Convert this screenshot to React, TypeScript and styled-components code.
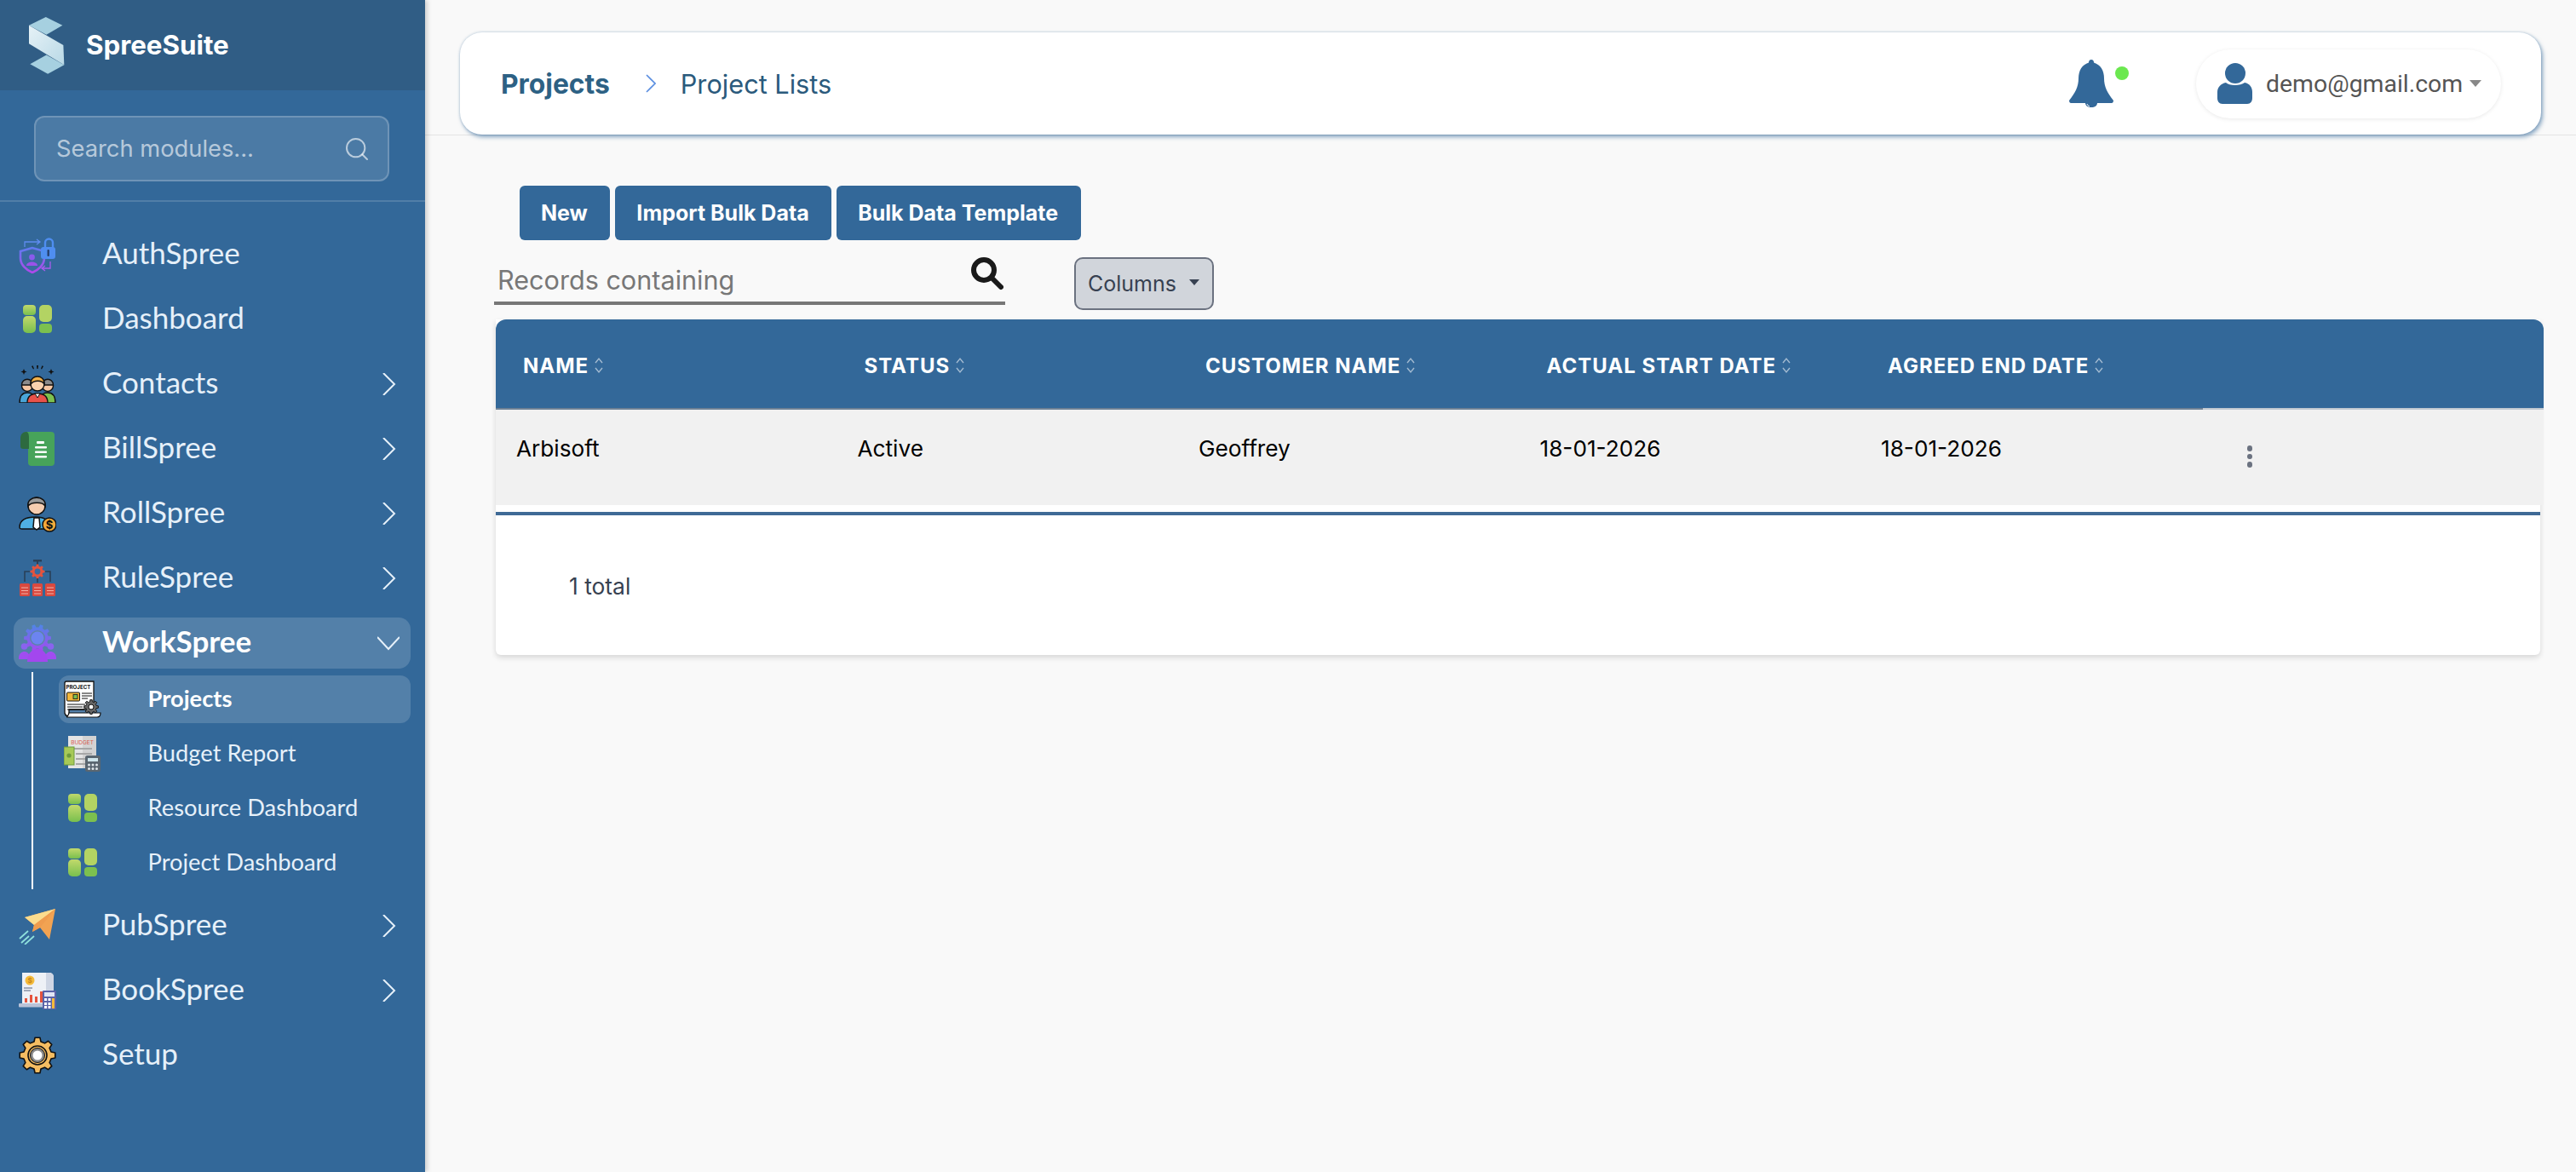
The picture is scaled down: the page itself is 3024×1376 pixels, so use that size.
import React from "react";
import styled, { createGlobalStyle } from "styled-components";
import { Search as SearchGlyph } from "lucide-react";

const GlobalStyle = createGlobalStyle`
  html, body { margin: 0; padding: 0; height: 100%; background: #f9f9f9; }
  #root { height: 100%; }
  * { box-sizing: border-box; }
`;

const Shell = styled.div`
  display: flex;
  width: 3024px;
  height: 1376px;
  overflow: hidden;
  background: #f9f9f9;
  font-family: Inter, "Liberation Sans", sans-serif;
`;

const Sidebar = styled.aside`
  flex: 0 0 499px;
  width: 499px;
  min-width: 0;
  display: flex;
  flex-direction: column;
  background: #336899;
  box-shadow: 3px 0 5px rgba(0, 0, 0, 0.16);
  position: relative;
  z-index: 2;
`;

const Brand = styled.div`
  height: 106px;
  display: flex;
  align-items: center;
  gap: 25px;
  padding-left: 33px;
  background: #305d85;
`;

const BrandName = styled.span`
  font-size: 31.3px;
  font-weight: 700;
  color: #fff;
`;

const SearchArea = styled.div`
  padding: 30px 42px 22px 40px;
  border-bottom: 2px solid rgba(255, 255, 255, 0.15);
`;

const ModuleSearch = styled.label`
  height: 77px;
  display: flex;
  align-items: center;
  padding: 0 20px 0 24px;
  background: rgba(255, 255, 255, 0.12);
  border: 2px solid rgba(255, 255, 255, 0.2);
  border-radius: 12px;
  color: rgba(255, 255, 255, 0.62);
`;

const ModuleInput = styled.input`
  flex: 1;
  width: 100%;
  min-width: 0;
  padding: 0;
  border: 0;
  outline: 0;
  background: transparent;
  font: 400 27.3px Inter, sans-serif;
  color: #fff;
  &::placeholder { color: rgba(255, 255, 255, 0.62); opacity: 1; }
`;

const Nav = styled.nav`
  display: flex;
  flex-direction: column;
  gap: 16px;
  padding: 32px 17px 0 16px;
`;

const NavGroup = styled.div`
  display: flex;
  flex-direction: column;
`;

const NavRow = styled.div<{ $active?: boolean }>`
  height: 60px;
  display: flex;
  align-items: center;
  gap: 54px;
  padding: 0 13px 0 6px;
  border-radius: 14px;
  background: ${(p) => (p.$active ? "rgba(255,255,255,0.16)" : "transparent")};
`;

const NavLabel = styled.span<{ $active?: boolean }>`
  flex: 1;
  padding-bottom: 7px;
  font-family: Lato, sans-serif;
  font-size: 35px;
  font-weight: ${(p) => (p.$active ? 700 : 400)};
  color: ${(p) => (p.$active ? "#fff" : "#e6f0f9")};
`;

const Chevron = styled.svg`
  flex: 0 0 26px;
  width: 26px;
  height: 26px;
  fill: none;
  stroke: #e6f0f9;
  stroke-width: 2;
`;

const SubList = styled.div`
  display: flex;
  flex-direction: column;
  gap: 8px;
  margin: 4px 0 -3px 21px;
  padding: 4px 0 3px 30px;
  border-left: 2px solid #fff;
`;

const SubRow = styled.div<{ $active?: boolean }>`
  height: 56px;
  display: flex;
  align-items: center;
  gap: 54.500px;
  padding-left: 6px;
  border-radius: 12px;
  background: ${(p) => (p.$active ? "rgba(255,255,255,0.16)" : "transparent")};
`;

const SubLabel = styled.span<{ $active?: boolean }>`
  padding-bottom: 4px;
  font-family: Lato, sans-serif;
  font-size: 27.3px;
  font-weight: ${(p) => (p.$active ? 700 : 400)};
  color: ${(p) => (p.$active ? "#fff" : "#e6f0f9")};
`;

const Main = styled.main`
  flex: 1;
  min-width: 0;
  display: flex;
  flex-direction: column;
`;

const TopBand = styled.header`
  height: 159px;
  padding: 38px 41px 0;
  border-bottom: 1px solid #e4e4e4;
`;

const TopCard = styled.div`
  height: 120px;
  display: flex;
  align-items: center;
  padding: 0 47px 0 48px;
  background: #fff;
  border-radius: 26px;
  box-shadow: 0 0 3px rgba(51, 104, 153, 0.35), 2px 3px 5px rgba(51, 104, 153, 0.55);
`;

const CrumbRoot = styled.span`
  font-size: 31.8px;
  font-weight: 700;
  color: #2d6184;
`;

const CrumbLeaf = styled.span`
  flex: 1;
  font-size: 30.7px;
  color: #2b5a7c;
`;

const CrumbChevron = styled.svg`
  width: 12px;
  height: 22px;
  margin: 0 29px 0 42px;
  fill: none;
  stroke: #5a8ee0;
  stroke-width: 1.6;
`;

const BellWrap = styled.div`
  position: relative;
  width: 52px;
  height: 56px;
  margin-right: 97px;
`;

const BellDot = styled.span`
  position: absolute;
  top: 8px;
  left: 54px;
  width: 16px;
  height: 16px;
  border-radius: 50%;
  background: #6be84f;
`;

const UserPill = styled.div`
  width: 358px;
  height: 81px;
  display: flex;
  align-items: center;
  padding-left: 25px;
  border-radius: 41px;
  background: #fff;
  box-shadow: 0 1px 5px rgba(0, 0, 0, 0.09);
`;

const UserMail = styled.span`
  margin-left: 16px;
  font-family: Roboto, sans-serif;
  font-size: 28.4px;
  color: #555;
`;

const UserCaret = styled.span`
  margin-left: 8px;
  border-left: 7px solid transparent;
  border-right: 7px solid transparent;
  border-top: 8px solid #888;
`;

const Content = styled.div`
  display: flex;
  flex-direction: column;
  padding-top: 59px;
`;

const ActionBar = styled.div`
  display: flex;
  gap: 6px;
  padding-left: 111px;
`;

const ActionButton = styled.button`
  height: 64px;
  padding: 0 26.5px 0 25px;
  border: 0;
  border-radius: 6px;
  background: #336899;
  color: #fff;
  font: 700 25px Inter, sans-serif;
`;

const FilterBar = styled.div`
  display: flex;
  align-items: flex-start;
  gap: 81px;
  margin: 20px 0 11px 81px;
`;

const RecordSearch = styled.div`
  width: 600px;
  height: 56px;
  display: flex;
  align-items: flex-start;
  padding: 0 2px 0 4px;
  border-bottom: 4px solid #777;
`;

const RecordInput = styled.input`
  flex: 1;
  min-width: 0;
  height: 52px;
  padding: 0;
  border: 0;
  outline: 0;
  background: transparent;
  font: 400 30.6px Inter, sans-serif;
  &::placeholder { color: #777; opacity: 1; }
`;

const ColumnsButton = styled.button`
  width: 164px;
  height: 62px;
  display: flex;
  align-items: center;
  padding: 0 0 0 14px;
  background: #d1d5db;
  border: 2px solid #6b7280;
  border-radius: 10px;
  color: #374151;
  font: 400 25px Inter, sans-serif;
`;

const ColumnsCaret = styled.span`
  margin: 0 0 4px 15px;
  border-left: 6.5px solid transparent;
  border-right: 6.5px solid transparent;
  border-top: 7px solid #374151;
`;

const TableCard = styled.section`
  width: 2400px;
  height: 394px;
  margin-left: 83px;
  background: #fff;
  border-radius: 0 0 6px 6px;
  box-shadow: 0 3px 6px rgba(0, 0, 0, 0.14);
`;

const TableHead = styled.div`
  width: 2404px;
  height: 106px;
  display: grid;
  grid-template-columns: repeat(5, 400.5px) 1fr;
  align-items: center;
  padding-top: 4px;
  background: #336899;
  border-style: solid;
  border-width: 0 0 2px;
  border-image: linear-gradient(to right, #6f8296 2003px, #c0c8d0 2003px) 1;
  border-radius: 12px 12px 0 0;
`;

const HeadCell = styled.div`
  display: flex;
  align-items: center;
  gap: 7px;
  padding-left: 32px;
  font-size: 24px;
  font-weight: 700;
  letter-spacing: 1px;
  color: #fff;
`;

const SortIcon = styled.svg`
  width: 10px;
  height: 20px;
  fill: none;
  stroke: rgba(255, 255, 255, 0.55);
  stroke-width: 1.4;
`;

const TableRow = styled.div`
  width: 2404px;
  height: 112px;
  display: grid;
  grid-template-columns: repeat(5, 400.5px) 1fr;
  padding-top: 30px;
  background: #f1f1f1;
`;

const BodyCell = styled.div`
  padding-left: 24px;
  font-size: 26.2px;
  line-height: 32px;
  color: #000;
`;

const RowMenu = styled.div`
  display: flex;
  flex-direction: column;
  gap: 3px;
  margin: 12px 0 0 53px;
`;

const RowMenuDot = styled.span`
  width: 6px;
  height: 6.5px;
  border-radius: 50%;
  background: #6b7280;
`;

const TableFoot = styled.div`
  margin-top: 8px;
  height: 168px;
  padding: 67px 0 0 86px;
  border-top: 4px solid #3f6a96;
  font-size: 26.4px;
  line-height: 32px;
  color: #374151;
`;

const gear = (cx: number, cy: number, ro: number, ri: number, n: number) => {
  let d = "";
  for (let i = 0; i < n; i++) {
    const a = (i / n) * Math.PI * 2;
    const w = Math.PI / n;
    const pt = (r: number, t: number) =>
      `${(cx + r * Math.cos(t)).toFixed(2)} ${(cy + r * Math.sin(t)).toFixed(2)}`;
    d += `${i ? "L" : "M"}${pt(ri, a - w * 0.62)} L${pt(ro, a - w * 0.36)} L${pt(ro, a + w * 0.36)} L${pt(ri, a + w * 0.62)} `;
  }
  return d + "Z";
};

const IconSvg = styled.svg`
  flex: 0 0 44px;
  width: 44px;
  height: 44px;
`;

const BrandMark = () => (
  <svg width="43" height="70" viewBox="100 50 130 210">
    <defs>
      <linearGradient id="lg-s" x1="0" y1="0" x2="1" y2="1">
        <stop offset="0" stopColor="#e6f2f7" />
        <stop offset="1" stopColor="#b9d9e6" />
      </linearGradient>
    </defs>
    <path d="M103 85 163 55 222 85 165 118Z" fill="#a6d0e0" />
    <path d="M107 222 165 190 228 225 170 257Z" fill="#a6d0e0" />
    <path d="M103 85 225 155 228 225 103 150Z" fill="url(#lg-s)" />
  </svg>
);

const AuthIcon = () => (
  <IconSvg viewBox="0 0 44 44">
    <defs>
      <linearGradient id="lg-a" x1="0" y1="0" x2="0" y2="1">
        <stop offset="0" stopColor="#5f7cf0" />
        <stop offset="1" stopColor="#b148ea" />
      </linearGradient>
    </defs>
    <path d="M16 14 2 18V26C2 34 9 40 16 43 23 40 30 34 30 26V18Z" fill="#3a6ba0" stroke="url(#lg-a)" strokeWidth="2.6" />
    <circle cx="15.5" cy="25" r="3.4" fill="#8a5bec" />
    <path d="M9 35C9 29 22 29 22 35Z" fill="#9a52ea" />
    <path d="M7 13V7H24M21 4 25 7 21 10" fill="none" stroke="#5f8cf0" strokeWidth="1.3" />
    <path d="M37 30V38H28M31 35 27 38 31 41" fill="none" stroke="#a95cee" strokeWidth="1.3" />
    <path d="M31 14V8A4.5 4.5 0 0 1 40 8V14" fill="none" stroke="#4f8ef0" strokeWidth="2.4" />
    <rect x="26" y="13" width="17" height="14" rx="3" fill="#4f8ef0" />
    <rect x="33.5" y="16" width="2.4" height="8" rx="1" fill="#26406e" />
  </IconSvg>
);

const TilesIcon = () => (
  <IconSvg viewBox="-5 -5 44 44">
    <defs>
      <linearGradient id="lg-t" x1="0" y1="0" x2="0" y2="1">
        <stop offset="0" stopColor="#c2d96c" />
        <stop offset="1" stopColor="#78bf4e" />
      </linearGradient>
    </defs>
    <g fill="url(#lg-t)">
      <rect x="0" y="0" width="15" height="12" rx="4" />
      <rect x="0" y="13" width="15" height="20" rx="5" />
    </g>
    <rect x="19" y="0" width="15" height="20" rx="5" fill="#b3d363" />
    <rect x="19" y="22" width="15" height="11" rx="4" fill="#7cc04f" />
  </IconSvg>
);

const ContactsIcon = () => (
  <IconSvg viewBox="0 0 44 44">
    <g fill="#111">
      <path d="M21 0h2l-.4 4h-1.2zM15 1l1.6-.7 1.4 3.6-1 .5zM29 1l-1.6-.7L26 3.900l1 .5z" />
      <path d="M6 4 7 6.500 9.500 7.500 7 8.500 6 11 5 8.500 2.500 7.500 5 6.500zM38 4l1 2.500 2.500 1-2.500 1-1 2.500-1-2.500-2.500-1 2.500-1z" />
    </g>
    <g stroke="#111" strokeWidth="1.4">
      <path d="M1 44C1 34 6 32 10 32S20 34 20 44Z" fill="#49a5d8" />
      <path d="M24 44C24 34 30 32 34 32S43 34 43 44Z" fill="#7cc04f" />
      <circle cx="10" cy="24" r="6.500" fill="#f5c7a3" />
      <path d="M3.500 23C3.500 14 16.500 14 16.500 23Z" fill="#8b8b8b" />
      <circle cx="34" cy="24" r="6.500" fill="#f5c7a3" />
      <path d="M27.500 23C27.500 14 40.500 14 40.500 23Z" fill="#8b8b8b" />
      <path d="M10 44C10 35 16 33 22 33S34 35 34 44Z" fill="#e8524a" />
      <circle cx="22" cy="22" r="8" fill="#f9d2ae" />
      <path d="M14 22C13 10 31 10 30 22 27 17 18 17 14 22Z" fill="#f0b04a" />
    </g>
    <path d="M19 33 22 38 25 33Z" fill="#fff" stroke="#111" strokeWidth="1" />
  </IconSvg>
);

const BillIcon = () => (
  <IconSvg viewBox="0 0 44 44">
    <path d="M9 2H38A4 4 0 0 1 42 6V38A4 4 0 0 1 38 42H15A4 4 0 0 1 11 38V22H4V8A6 6 0 0 1 9 2Z" fill="#47a35a" />
    <path d="M9 2C5 2 2 5 2 9V19A3 3 0 0 0 5 22H12V9C12 5 11 2 9 2Z" fill="#2d6a3f" />
    <g fill="#fff">
      <rect x="21" y="13" width="9" height="3" rx="1" />
      <rect x="19" y="19" width="14" height="2.600" rx="1" />
      <rect x="19" y="24.500" width="14" height="2.600" rx="1" />
      <rect x="19" y="30" width="14" height="2.600" rx="1" />
    </g>
  </IconSvg>
);

const RollIcon = () => (
  <IconSvg viewBox="0 0 44 44">
    <g stroke="#111" strokeWidth="1.5">
      <path d="M1 38C1 28 12 26 20 26S36 28 36 38C36 40 33 40 30 40H4C2 40 1 40 1 38Z" fill="#4fb0e2" />
      <path d="M18 27H24L25 38 21 41 17 38Z" fill="#fff" />
      <circle cx="21" cy="13" r="10" fill="#f6cdb0" />
      <path d="M11 13C9 0 33 0 31 13 28 8 15 8 11 13Z" fill="#9a9a9a" />
      <circle cx="36" cy="35" r="8" fill="#f2a93b" />
    </g>
    <text x="36" y="40" textAnchor="middle" fontFamily="Inter, sans-serif" fontSize="13" fontWeight="700" fill="#111">$</text>
  </IconSvg>
);

const RuleIcon = () => (
  <IconSvg viewBox="0 0 44 44">
    <rect x="17" y="0" width="10" height="2.500" fill="#2a4058" />
    <rect x="21" y="2" width="2" height="4" fill="#2a4058" />
    <path d={gear(22, 14, 8.500, 6.500, 8)} fill="#e5533d" />
    <circle cx="22" cy="14" r="3.400" fill="#3a6ba0" />
    <path d="M13 14H7V26M31 14H37V26M22 22V27" fill="none" stroke="#2a4058" strokeWidth="1.6" />
    <g fill="#d9493f">
      <rect x="1" y="28" width="12" height="15" rx="1.500" />
      <rect x="16" y="28" width="12" height="15" rx="1.500" />
      <rect x="31" y="28" width="12" height="15" rx="1.500" />
    </g>
    <path d="M3 33H11M3 36.500H11M3 40H11M18 33H26M18 36.500H26M18 40H26M33 33H41M33 36.500H41M33 40H41" stroke="#f4b3a8" strokeWidth="1.100" />
  </IconSvg>
);

const WorkIcon = () => (
  <IconSvg viewBox="0 0 44 44">
    <defs>
      <linearGradient id="lg-w" x1="0" y1="0" x2="0" y2="1">
        <stop offset="0" stopColor="#4e86e6" />
        <stop offset="1" stopColor="#a54af0" />
      </linearGradient>
    </defs>
    <path d={gear(22, 16, 16, 12.500, 10)} fill="url(#lg-w)" />
    <circle cx="22" cy="16" r="9" fill="#5c84a8" />
    <circle cx="22" cy="16" r="7.500" fill="#6c84f0" />
    <g fill="#a04df0">
      <circle cx="6.500" cy="26" r="3.800" fill="#8a63ee" />
      <circle cx="37.500" cy="26" r="3.800" fill="#8a63ee" />
      <path d="M0 41C-1 29 14 29 13 41ZM31 41C30 29 45 29 44 41Z" />
    </g>
    <path d="M10 44C10 24 34 24 34 44Z" fill="#a347ee" />
  </IconSvg>
);

const ProjectIcon = () => (
  <IconSvg viewBox="0 0 44 44">
    <path d="M1 3A2 2 0 0 1 3 1H35V34H6V42A5 5 0 0 1 1 38Z" fill="#fff" stroke="#111" strokeWidth="1.300" />
    <text x="2.500" y="9.500" fontFamily="Inter, sans-serif" fontSize="6.200" fontWeight="700" fill="#111">PROJECT</text>
    <rect x="3.500" y="14" width="15" height="10" rx="1" fill="#f2b63b" stroke="#111" strokeWidth="1" />
    <rect x="11" y="16.500" width="5" height="5" fill="#7cc04f" stroke="#111" strokeWidth=".8" />
    <path d="M21 15H33M21 18H33M21 21H28M4 28H25M4 31H22M4 34H24" stroke="#111" strokeWidth="1" />
    <path d="M6 38H43C43 42 41 43 39 43H4C2 43 6 41 6 38Z" fill="#fff" stroke="#111" strokeWidth="1.200" />
    <path d={gear(32, 31, 8.500, 6.300, 8)} fill="#666" stroke="#111" strokeWidth=".9" />
    <circle cx="32" cy="31" r="3" fill="#fff" stroke="#111" />
  </IconSvg>
);

const BudgetIcon = () => (
  <IconSvg viewBox="0 0 44 44">
    <rect x="5" y="1" width="33" height="38" fill="#e4e4e4" />
    <rect x="22" y="1" width="16" height="38" fill="#d2d2d2" />
    <text x="21.500" y="11" textAnchor="middle" fontFamily="Inter, sans-serif" fontSize="6.500" fill="#d9594c">BUDGET</text>
    <path d="M9 16H33M14 22H33M14 28H33M14 34H30" stroke="#a7a7a7" strokeWidth="2" />
    <rect x="0" y="14" width="12" height="21" fill="#a7c957" stroke="#6d9a3c" />
    <circle cx="6" cy="24" r="2.600" fill="#6d9a3c" />
    <rect x="25" y="24" width="18" height="19" rx="2.500" fill="#5a6670" />
    <rect x="28" y="27" width="12" height="4" fill="#cfe4ea" />
    <g fill="#dfe6ea">
      <circle cx="29.500" cy="35" r="1.500" /><circle cx="34" cy="35" r="1.500" /><circle cx="38.500" cy="35" r="1.500" />
      <circle cx="29.500" cy="39.500" r="1.500" /><circle cx="34" cy="39.500" r="1.500" /><circle cx="38.500" cy="39.500" r="1.500" />
    </g>
  </IconSvg>
);

const PlaneIcon = () => (
  <IconSvg viewBox="0 0 44 44">
    <path d="M43 2 7 12 18 21 16 29 25 24 36 38Z" fill="#f2a352" />
    <path d="M43 2 7 12 18 21Z" fill="#fbdc8e" />
    <path d="M43 2 18 21 16 29 25 24Z" fill="#ef9c4e" />
    <path d="M1 37 11 28M7 44 18 34M3 42 12 34" stroke="#8fe0dc" strokeWidth="1.800" />
  </IconSvg>
);

const BookIcon = () => (
  <IconSvg viewBox="0 0 44 44">
    <path d="M4 1H36A5 5 0 0 1 41 6V38H4Z" fill="#eef1f6" />
    <path d="M32 1H36A5 5 0 0 1 41 6V28H32Z" fill="#cfd6e4" />
    <rect x="0" y="37" width="38" height="4.500" rx="1" fill="#b9c3d8" />
    <circle cx="13" cy="10" r="5.500" fill="#f5bb3a" />
    <text x="13" y="13" textAnchor="middle" fontFamily="Inter, sans-serif" fontSize="8" fontWeight="700" fill="#c9861b">$</text>
    <path d="M6 19H16M6 22H14" stroke="#8b93a7" strokeWidth="1.300" />
    <g fill="#e5533d">
      <rect x="7" y="31" width="3" height="5" />
      <rect x="13" y="27" width="3" height="9" />
      <rect x="19" y="29" width="3" height="7" />
      <rect x="25" y="23" width="3" height="13" />
    </g>
    <rect x="28" y="22" width="16" height="22" rx="1" fill="#5b63a8" />
    <rect x="30" y="24" width="12" height="5" fill="#e2e6f5" />
    <g fill="#fff">
      <rect x="30" y="31" width="3" height="3" /><rect x="34.500" y="31" width="3" height="3" /><rect x="30" y="36" width="3" height="3" />
      <rect x="34.500" y="36" width="3" height="3" /><rect x="30" y="40" width="3" height="3" /><rect x="34.500" y="40" width="3" height="3" />
    </g>
    <rect x="39" y="31" width="3" height="12" fill="#f5bb3a" />
  </IconSvg>
);

const SetupIcon = () => (
  <IconSvg viewBox="0 0 44 44">
    <path d={gear(22, 22, 21, 16.500, 8)} fill="#f5bd62" stroke="#111" strokeWidth="1.600" strokeLinejoin="round" />
    <circle cx="22" cy="22" r="11" fill="#f5bd62" stroke="#111" strokeWidth="1.600" />
    <circle cx="22" cy="22" r="8.500" fill="#8b8b8b" stroke="#111" strokeWidth="1" />
    <circle cx="22" cy="22" r="5.500" fill="#fff" />
  </IconSvg>
);

const ChevronRight = () => (
  <Chevron viewBox="0 0 26 26"><path d="M7 0 20 13 7 26" /></Chevron>
);
const ChevronDown = () => (
  <Chevron viewBox="0 0 26 26"><path d="M0 6 13 20 26 6" /></Chevron>
);

const Bell = () => (
  <svg width="52" height="56" viewBox="0 0 52 56" fill="#336899">
    <path d="M26 0C28 0 29 1.500 29 3.500 37 6 41 13 41 22 41 32 45 39 52 48 52 50 51 51 50 51H2C1 51 0 50 0 48 7 39 11 32 11 22 11 13 15 6 23 3.500 23 1.500 24 0 26 0Z" />
    <path d="M19 51C19 54 22 56 26 56S33 54 33 51Z" />
    <path d="M21 52C21.500 53.500 22.500 54.500 24 55" fill="none" stroke="#fff" strokeWidth="1" />
  </svg>
);

const UserIcon = () => (
  <svg width="41" height="48" viewBox="0 0 41 48" fill="#336899" style={{ flex: "0 0 41px" }}>
    <ellipse cx="21" cy="12" rx="12" ry="12" />
    <path d="M10 23C14 27 27 27 32 23 38 24 41 29 41 34V41C41 45 39 48 35 48H6C2 48 0 45 0 41V34C0 29 4 24 10 23Z" />
  </svg>
);

const Sort = () => (
  <SortIcon viewBox="0 0 10 20">
    <path d="M1 7 5 2 9 7M1 13 5 18 9 13" />
  </SortIcon>
);

type NavEntry = { label: string; icon: React.ReactNode; more?: boolean };

const before: NavEntry[] = [
  { label: "AuthSpree", icon: <AuthIcon /> },
  { label: "Dashboard", icon: <TilesIcon /> },
  { label: "Contacts", icon: <ContactsIcon />, more: true },
  { label: "BillSpree", icon: <BillIcon />, more: true },
  { label: "RollSpree", icon: <RollIcon />, more: true },
  { label: "RuleSpree", icon: <RuleIcon />, more: true },
];

const after: NavEntry[] = [
  { label: "PubSpree", icon: <PlaneIcon />, more: true },
  { label: "BookSpree", icon: <BookIcon />, more: true },
  { label: "Setup", icon: <SetupIcon /> },
];

const subs = [
  { label: "Projects", icon: <ProjectIcon />, active: true },
  { label: "Budget Report", icon: <BudgetIcon /> },
  { label: "Resource Dashboard", icon: <TilesIcon /> },
  { label: "Project Dashboard", icon: <TilesIcon /> },
];

const columns = ["NAME", "STATUS", "CUSTOMER NAME", "ACTUAL START DATE", "AGREED END DATE"];
const record = ["Arbisoft", "Active", "Geoffrey", "18-01-2026", "18-01-2026"];

const renderEntry = (e: NavEntry) => (
  <NavRow key={e.label}>
    {e.icon}
    <NavLabel>{e.label}</NavLabel>
    {e.more && <ChevronRight />}
  </NavRow>
);

export default function App() {
  return (
    <Shell>
      <GlobalStyle />
      <Sidebar>
        <Brand>
          <BrandMark />
          <BrandName>SpreeSuite</BrandName>
        </Brand>
        <SearchArea>
          <ModuleSearch>
            <ModuleInput placeholder="Search modules..." />
            <SearchGlyph size={32} strokeWidth={1.5} />
          </ModuleSearch>
        </SearchArea>
        <Nav>
          {before.map(renderEntry)}
          <NavGroup>
            <NavRow $active>
              <WorkIcon />
              <NavLabel $active>WorkSpree</NavLabel>
              <ChevronDown />
            </NavRow>
            <SubList>
              {subs.map((s) => (
                <SubRow key={s.label} $active={s.active}>
                  {s.icon}
                  <SubLabel $active={s.active}>{s.label}</SubLabel>
                </SubRow>
              ))}
            </SubList>
          </NavGroup>
          {after.map(renderEntry)}
        </Nav>
      </Sidebar>
      <Main>
        <TopBand>
          <TopCard>
            <CrumbRoot>Projects</CrumbRoot>
            <CrumbChevron viewBox="0 0 12 22"><path d="M1 1 11 11 1 21" /></CrumbChevron>
            <CrumbLeaf>Project Lists</CrumbLeaf>
            <BellWrap>
              <Bell />
              <BellDot />
            </BellWrap>
            <UserPill>
              <UserIcon />
              <UserMail>demo@gmail.com</UserMail>
              <UserCaret />
            </UserPill>
          </TopCard>
        </TopBand>
        <Content>
          <ActionBar>
            <ActionButton>New</ActionButton>
            <ActionButton>Import Bulk Data</ActionButton>
            <ActionButton>Bulk Data Template</ActionButton>
          </ActionBar>
          <FilterBar>
            <RecordSearch>
              <RecordInput placeholder="Records containing" />
              <svg width="38" height="38" viewBox="0 0 38 38" fill="none" stroke="#1a1a1a" strokeWidth="6">
                <circle cx="15" cy="15" r="12" />
                <path d="M24 24 35 35" strokeLinecap="round" />
              </svg>
            </RecordSearch>
            <ColumnsButton>
              Columns
              <ColumnsCaret />
            </ColumnsButton>
          </FilterBar>
          <TableCard>
            <TableHead>
              {columns.map((c) => (
                <HeadCell key={c}>
                  {c}
                  <Sort />
                </HeadCell>
              ))}
              <div />
            </TableHead>
            <TableRow>
              {record.map((v, i) => (
                <BodyCell key={i}>{v}</BodyCell>
              ))}
              <RowMenu>
                <RowMenuDot />
                <RowMenuDot />
                <RowMenuDot />
              </RowMenu>
            </TableRow>
            <TableFoot>1 total</TableFoot>
          </TableCard>
        </Content>
      </Main>
    </Shell>
  );
}
